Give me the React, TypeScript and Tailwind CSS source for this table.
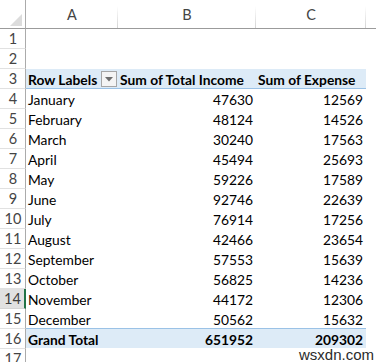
import React from "react";

const rows: [string, string, string][] = [
  ["January", "47630", "12569"],
  ["February", "48124", "14526"],
  ["March", "30240", "17563"],
  ["April", "45494", "25693"],
  ["May", "59226", "17589"],
  ["June", "92746", "22639"],
  ["July", "76914", "17256"],
  ["August", "42466", "23654"],
  ["September", "57553", "15639"],
  ["October", "56825", "14236"],
  ["November", "44172", "12306"],
  ["December", "50562", "15632"],
];

function RowHead({ n, selected }: { n: number; selected?: boolean }) {
  return (
    <div
      className={
        selected
          ? "h-[20px] flex items-center justify-center border-b border-[#d4d4d4] border-r-2 border-r-[#217346] bg-[#e1e1e1] text-[#3c3c3c] text-[14.5px]"
          : "h-[20px] flex items-center justify-center border-b border-[#e1e1e1] border-r border-r-[#ababab] bg-white text-[#444444] text-[14.5px]"
      }
    >
      <span className="pl-[1px] pt-[1px]">{n}</span>
    </div>
  );
}

function ColHead({ label, sep = true }: { label: string; sep?: boolean }) {
  return (
    <div className="relative h-[29px] flex items-center justify-center border-b border-[#9b9b9b] text-[#444444] bg-white text-[14.5px]">
      <span className="pt-[2px]">{label}</span>
      {sep && (
        <div className="absolute right-0 top-[6px] bottom-0 w-px bg-gradient-to-b from-white to-[#d4d4d4]" />
      )}
    </div>
  );
}

export default function App() {
  return (
    <div
      className="relative w-[376px] h-[362px] overflow-hidden bg-white text-[13.8px] leading-none"
      style={{ fontFamily: "Lato, 'Open Sans', sans-serif" }}
    >
      <div className="grid grid-cols-[26px_92px_138px_110px_1fr]">
        {/* header row */}
        <div className="relative h-[29px] border-b border-[#9b9b9b] border-r border-r-[#ababab] bg-white">
          <svg className="absolute left-[10px] top-[14px]" width="12" height="12" viewBox="0 0 12 12">
            <polygon points="12,0 12,12 0,12" fill="#dcdcdc" />
          </svg>
        </div>
        <ColHead label="A" />
        <ColHead label="B" />
        <ColHead label="C" />
        <div className="h-[29px] border-b border-[#9b9b9b] bg-white" />

        {/* rows 1-2 */}
        <RowHead n={1} />
        <div className="col-span-4" />
        <RowHead n={2} />
        <div className="col-span-4" />

        {/* row 3 header */}
        <RowHead n={3} />
        <div className="h-[20px] col-span-3 grid grid-cols-[92px_138px_110px] bg-[#ddebf7] border-b border-[#9bc2e6] font-bold text-black">
          <div className="flex items-center pl-[2px] relative">
            <span className="pt-[2px]">Row Labels</span>
            <div className="absolute right-[1px] top-[2px] w-[16px] h-[16px] border border-[#a6a6a6] bg-[#f4f4f4] flex items-center justify-center">
              <svg width="8" height="5" viewBox="0 0 8 5">
                <polygon points="0,0 8,0 4,4.5" fill="#6e6e6e" />
              </svg>
            </div>
          </div>
          <div className="flex items-center pl-[2px]">
            <span className="pt-[2px]">Sum of Total Income</span>
          </div>
          <div className="flex items-center pl-[2px]">
            <span className="pt-[2px]">Sum of Expense</span>
          </div>
        </div>
        <div />

        {rows.map(([m, a, b], i) => (
          <React.Fragment key={m}>
            <RowHead n={i + 4} selected={i + 4 === 14} />
            <div className="h-[20px] flex items-center pl-[2px] text-black">
              <span className="pt-[2px]">{m}</span>
            </div>
            <div className="h-[20px] flex items-center justify-end pr-[3px] text-black">
              <span className="pt-[2px]">{a}</span>
            </div>
            <div className="h-[20px] flex items-center justify-end pr-[3px] text-black">
              <span className="pt-[2px]">{b}</span>
            </div>
            <div />
          </React.Fragment>
        ))}

        {/* grand total */}
        <RowHead n={16} />
        <div className="h-[20px] col-span-3 grid grid-cols-[92px_138px_110px] bg-[#ddebf7] border-t border-[#9bc2e6] -mt-px font-bold text-black">
          <div className="flex items-center pl-[2px]">
            <span className="pt-[2px]">Grand Total</span>
          </div>
          <div className="flex items-center justify-end pr-[3px]">
            <span className="pt-[2px]">651952</span>
          </div>
          <div className="flex items-center justify-end pr-[3px]">
            <span className="pt-[2px]">209302</span>
          </div>
        </div>
        <div />

        <RowHead n={17} />
        <div className="col-span-4" />
      </div>

      <div
        className="absolute right-[2px] bottom-0 text-[15px] leading-none text-[#2b2b2b]"
        style={{ fontFamily: "'Liberation Sans', Arial, sans-serif" }}
      >
        wsxdn.com
      </div>
    </div>
  );
}
